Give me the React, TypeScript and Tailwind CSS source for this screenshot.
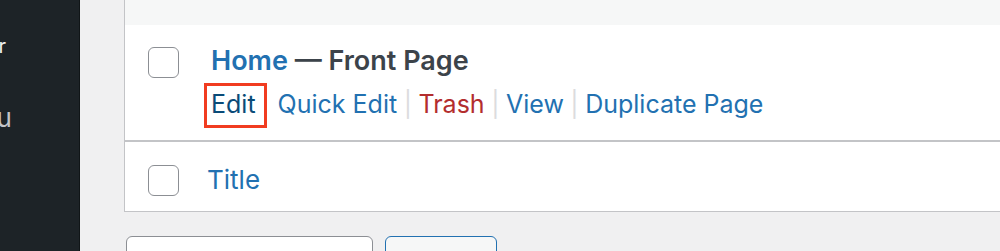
const link = 'text-[#2271b1]'

function Checkbox() {
  return <span className="block h-[31px] w-[31px] shrink-0 rounded-[6px] border-[1.5px] border-[#8c8f94] bg-white" />
}

function Sep() {
  return <span className="px-[6.5px] text-[#dcdcde]">|</span>
}

export default function App() {
  return (
    <div className="flex h-[251px] w-[1000px] overflow-hidden font-['Inter',sans-serif]">
      <aside className="w-[80px] shrink-0 overflow-hidden border-r border-[#101517] bg-[#1d2327]">
        <div className="mt-[33px] flex w-[6px] justify-end text-[20px] leading-[26px] text-[#f0f0f1]">
          <span className="whitespace-nowrap">Editor</span>
        </div>
        <div className="mt-[44px] flex w-[12px] justify-end text-[26px] leading-[30px] text-[#c3c4c7]">
          <span className="whitespace-nowrap">Menu</span>
        </div>
      </aside>

      <main className="flex flex-1 flex-col overflow-hidden bg-[#f0f0f1] pl-[44px]">
        <div className="w-[920px] border-b border-l border-[#c3c4c7] bg-white">
          <div className="h-[25px] bg-[#f6f7f7]" />

          <div className="flex h-[117px] gap-[32px] border-b-2 border-[#c3c4c7] pl-[23px] pt-[22px]">
            <Checkbox />
            <div className="-mt-[1px]">
              <div className="text-[27px] font-semibold leading-[30px]">
                <span className={link}>Home</span>
                <span className="text-[#3c434a]"> — Front Page</span>
              </div>
              <div className="mt-[13px] flex items-start text-[25px] leading-[30px]">
                <span className="-mb-[9px] -ml-[7px] -mt-[6px] border-[3px] border-[#f13c20] pb-[6px] pl-[4px] pr-[8px] pt-[3px] text-[#0a4b78]">
                  Edit
                </span>
                <span className="w-[11px]" />
                <span className={link}>Quick Edit</span>
                <Sep />
                <span className="text-[#b32d2e]">Trash</span>
                <Sep />
                <span className={link}>View</span>
                <Sep />
                <span className={link}>Duplicate Page</span>
              </div>
            </div>
          </div>

          <div className="flex h-[69px] gap-[28px] pl-[23px] pt-[23px]">
            <Checkbox />
            <span className={`${link} text-[26px] leading-[30px]`}>Title</span>
          </div>
        </div>

        <div className="mt-[24px] flex gap-[12px] pl-[2px]">
          <div className="h-[40px] w-[247px] rounded-[6px] border-[1.5px] border-[#8c8f94] bg-white" />
          <div className="h-[40px] w-[112px] rounded-[6px] border-[1.5px] border-[#2271b1] bg-[#f6f7f7]" />
        </div>
      </main>
    </div>
  )
}
